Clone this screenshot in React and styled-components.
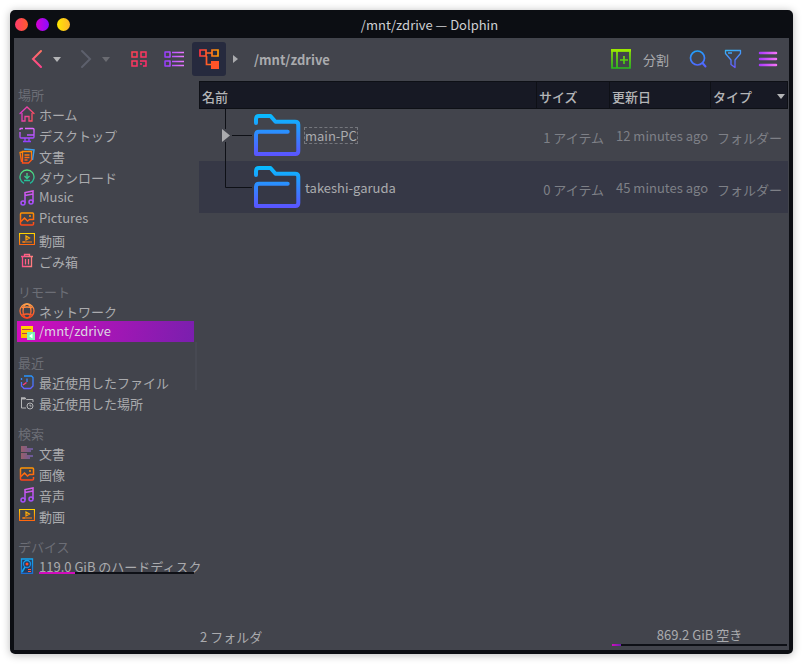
import React from "react";
import styled, { createGlobalStyle, css } from "styled-components";

const color = {
  panel: "#42444c",
  frame: "#0c0e13",
  header: "#171924",
  line: "#0e1016",
  stripe: "#363846",
  text: "#aaabae",
  dim: "#7e8087",
  faint: "#6c6e76",
};

const GlobalStyle = createGlobalStyle`
  * { box-sizing: border-box; }
  body {
    margin: 0;
    background: #fff;
    color: ${color.text};
    font: 13px/19px "Noto Sans CJK JP", "Noto Sans", sans-serif;
  }
  button {
    border: 0;
    padding: 0;
    background: none;
    color: inherit;
    font: inherit;
    cursor: pointer;
  }
  svg { display: block; flex: none; }
`;

const Desktop = styled.div`
  display: flex;
  min-height: 100vh;
  padding: 10px;
`;

const Window = styled.div`
  flex: 1;
  min-width: 0;
  display: flex;
  flex-direction: column;
  padding: 0 4px 4px;
  border-radius: 5px;
  background: ${color.frame};
  box-shadow: 0 1px 8px rgba(0, 0, 0, 0.28);
`;

const TitleBar = styled.header`
  display: flex;
  align-items: center;
  height: 28px;
`;

const WindowButtons = styled.div`
  display: flex;
  gap: 8px;
  padding-left: 1px;
`;

const WindowButton = styled.button`
  width: 13px;
  height: 13px;
  border-radius: 50%;
  background: linear-gradient(90deg, ${(p) => p.$from}, ${(p) => p.$to});
`;

const Title = styled.h1`
  flex: 1;
  margin: 0;
  font-size: 13px;
  font-weight: 400;
  text-align: center;
  color: #cfd0d3;
`;

const Toolbar = styled.div`
  display: flex;
  align-items: center;
  gap: 1px;
  height: 43px;
  padding: 0 4px 1px 6px;
  background: ${color.panel};
`;

const NavButton = styled.button`
  display: flex;
  align-items: center;
  gap: 5px;
  height: 34px;
  padding: 0 7px 0 6px;
  &:disabled { opacity: 0.35; }
`;

const ViewModes = styled.div`
  display: flex;
  gap: 1px;
  padding-left: 4px;
`;

const IconButton = styled.button`
  display: grid;
  place-items: center;
  width: 34px;
  height: 34px;
  border-radius: 3px;
  background: ${(p) => (p.$active ? "#262a3e" : "none")};
`;

const Breadcrumb = styled.nav`
  flex: 1;
  display: flex;
  align-items: center;
  gap: 16px;
  padding-left: 6px;
  a { color: inherit; font-weight: 700; text-decoration: none; }
`;

const SplitButton = styled.button`
  display: flex;
  align-items: center;
  gap: 11px;
  height: 34px;
  padding: 0 11px 0 6px;
  span { padding-top: 1px; }
`;

const Body = styled.div`
  flex: 1;
  display: flex;
  background: ${color.panel};
`;

const Places = styled.nav`
  flex: none;
  width: 180px;
  padding-left: 3px;
`;

const Section = styled.section`
  &:first-child { margin-top: -7px; }
`;

const SectionTitle = styled.h2`
  height: 29px;
  margin: 0;
  padding: 11px 0 0 1px;
  font-size: 13px;
  font-weight: 400;
  color: ${color.faint};
`;

const PlaceLink = styled.a`
  display: flex;
  align-items: center;
  gap: 4px;
  height: 21px;
  padding-left: 2px;
  color: inherit;
  text-decoration: none;
  white-space: nowrap;
  ${(p) => p.$selected && css`
    color: #dcd6e2;
    background: linear-gradient(100deg, #d20cbd, #7a1fae);
  `}
`;

const PlaceLabel = styled.span`
  position: relative;
  flex: 1;
  min-width: 0;
  height: 21px;
  padding-top: ${(p) => (p.$cjk ? "2px" : "0")};
`;

const UsageTrack = styled.span`
  display: block;
  height: 2px;
  background: ${color.line};
  ${(p) => p.$overlay && css`
    position: absolute;
    left: 0;
    right: 0;
    bottom: 2px;
  `}
`;

const UsageFill = styled.span`
  display: block;
  height: 100%;
  background: linear-gradient(90deg, #d20cbd, ${(p) => p.$end});
`;

const Splitter = styled.div`
  display: flex;
  align-items: center;
  width: 5px;
  padding-left: 1px;
  &::before {
    content: "";
    width: 2px;
    height: 48px;
    background: #474952;
  }
`;

const Main = styled.main`
  flex: 1;
  min-width: 0;
  display: flex;
  flex-direction: column;
  padding-right: 1px;
`;

const FileTable = styled.table`
  width: 100%;
  table-layout: fixed;
  border-collapse: separate;
  border-spacing: 0;
`;

const Col = styled.col`
  width: ${(p) => p.$width};
`;

const HeadCell = styled.th`
  height: 28px;
  padding: 2px 2px 0;
  border: solid ${color.line};
  border-width: 1px 1px 1px 0;
  background: ${color.header};
  color: #b4b5b7;
  font-weight: 500;
  text-align: left;
  &:first-child { border-left-width: 1px; }
`;

const HeadLabel = styled.div`
  display: flex;
  align-items: center;
  justify-content: space-between;
`;

const FileRow = styled.tr`
  height: 52px;
  &:nth-child(even) { background: ${color.stripe}; }
`;

const Cell = styled.td`
  padding: ${(p) => (p.$cjk ? "5px 6px 0" : "0 6px")};
  color: ${color.dim};
  text-align: ${(p) => (p.$right ? "right" : "left")};
  white-space: nowrap;
`;

const NameCell = styled.td`
  padding: 0;
`;

const NameContent = styled.div`
  display: flex;
  align-items: center;
  height: 52px;
`;

const Branch = styled.div`
  position: relative;
  width: 54px;
  height: 52px;
`;

const Expander = styled.button`
  position: absolute;
  left: 23px;
  top: 20px;
`;

const FileName = styled.span`
  margin-left: 3px;
  border: 1px dashed ${(p) => (p.$focused ? "#74767c" : "transparent")};
  line-height: 15px;
`;

const StatusBar = styled.footer`
  display: flex;
  justify-content: space-between;
  align-items: flex-end;
  margin-top: auto;
  padding: 0 1px 4px;
`;

const Capacity = styled.div`
  width: 175px;
  text-align: center;
`;

const CapacityText = styled.div`
  line-height: 19px;
`;

/* Gradient in icon coordinates, so it also paints perfectly straight strokes */
function SpaceGrad({ id, from, to, x2, y2 }) {
  return (
    <linearGradient id={id} gradientUnits="userSpaceOnUse" x1="0" y1="0" x2={x2} y2={y2}>
      <stop offset="0" stopColor={from} />
      <stop offset="1" stopColor={to} />
    </linearGradient>
  );
}

const Icon = ({ size = 22, children }) => (
  <svg width={size} height={size} viewBox={`0 0 ${size} ${size}`} fill="none" aria-hidden="true">
    {children}
  </svg>
);

const DownArrow = () => (
  <svg width="8" height="5" viewBox="0 0 8 5" aria-hidden="true"><path d="M0 0h8L4 5z" fill="#b4b5b7" /></svg>
);

const RightArrow = ({ w = 5, h = 8 }) => (
  <svg width={w} height={h} viewBox={`0 0 ${w} ${h}`} aria-hidden="true">
    <path d={`M0 0L${w} ${h / 2}L0 ${h}z`} fill="#aaabae" />
  </svg>
);

const BackIcon = () => (
  <Icon>
    <defs><SpaceGrad id="back" from="#ff7a5c" to="#ff3f8e" x2={0} y2={20} /></defs>
    <path d="M15 3L7 11l8 8" stroke="url(#back)" strokeWidth="2" strokeLinecap="round" />
  </Icon>
);

const ForwardIcon = () => (
  <Icon><path d="M7 3l8 8-8 8" stroke="#8f94a8" strokeWidth="2" strokeLinecap="round" /></Icon>
);

const GridIcon = () => (
  <Icon>
    <defs><SpaceGrad id="grid" from="#ff4a4a" to="#ff2d6a" x2={16} y2={16} /></defs>
    <path d="M4 4h5v5H4zM13 4h5v5h-5zM4 13h5v5H4zM12 13h6v5h-3M13 15v2" stroke="url(#grid)" strokeWidth="1.500" />
  </Icon>
);

const ListIcon = () => (
  <Icon>
    <defs><SpaceGrad id="list" from="#8f35ff" to="#f07cff" x2={22} y2={0} /></defs>
    <path d="M2 4h5v5H2zM2 13h5v5H2z" stroke="url(#list)" strokeWidth="1.500" strokeLinejoin="round" />
    <path d="M9 4.500h12M9 8.500h12M9 13.500h12M9 17.500h12" stroke="url(#list)" strokeWidth="1.500" />
  </Icon>
);

const TreeIcon = () => (
  <Icon>
    <defs><SpaceGrad id="tree" from="#ff2b45" to="#ffa400" x2={22} y2={0} /></defs>
    <path d="M2 2h6v6H2zM14 2h6v6h-6zM8 5h6M8.500 8v8.500H13" stroke="url(#tree)" strokeWidth="1.700" />
    <path d="M13 13h8v8h-8z" fill="#ff5428" />
  </Icon>
);

const SplitIcon = () => (
  <Icon>
    <defs><SpaceGrad id="split" from="#9fef00" to="#1fb81f" x2={0} y2={22} /></defs>
    <path d="M2 3h18v17H2zM7 3v17M10 12h8M14 8v8" stroke="url(#split)" strokeWidth="1.700" />
    <path d="M1 1h20v2.500H1z" fill="#9be800" />
  </Icon>
);

const SearchIcon = () => (
  <Icon>
    <defs><SpaceGrad id="search" from="#12b4ff" to="#5a5cff" x2={4} y2={22} /></defs>
    <circle cx="10.500" cy="10" r="7" stroke="url(#search)" strokeWidth="1.700" />
    <path d="M15.500 15l3 3.500" stroke="url(#search)" strokeWidth="2" strokeLinecap="round" />
  </Icon>
);

const FilterIcon = () => (
  <Icon>
    <defs><SpaceGrad id="filter" from="#2cc4f5" to="#6a55ff" x2={6} y2={22} /></defs>
    <path d="M3.500 2.500h15v3L13 12v7.500l-4-3V12L3.500 5.500zM6 5h4" stroke="url(#filter)" strokeWidth="1.300" strokeLinejoin="round" />
  </Icon>
);

const MenuIcon = () => (
  <Icon>
    <defs><SpaceGrad id="menu" from="#a030ff" to="#ff7cf6" x2={22} y2={0} /></defs>
    <path d="M3 5h16M3 11h16M3 17h16" stroke="url(#menu)" strokeWidth="2.500" strokeLinecap="round" />
  </Icon>
);

const FolderIcon = ({ id }) => (
  <Icon size={48}>
    <defs><SpaceGrad id={id} from="#00c4ff" to="#5a55ff" x2={0} y2={44} /></defs>
    <path
      d="M3 12V8q0-3 3-3h11.500l5 5.700H42q3.300 0 3.300 3V40q0 3-3 3H3V23.700q0-3 3-3h28.700"
      stroke={`url(#${id})`} strokeWidth="4" strokeLinecap="round" strokeLinejoin="round"
    />
  </Icon>
);

const placeIcons = {
  home: (id) => (
    <>
      <defs><SpaceGrad id={id} from="#d435e8" to="#ff4f5c" x2={16} y2={4} /></defs>
      <path d="M1 7.500L8 1l7 6.500M3 7.500V15h3v-4.500h4V15h3V7.500" stroke={`url(#${id})`} strokeWidth="1.300" strokeLinecap="round" />
    </>
  ),
  desktop: (id) => (
    <>
      <defs><SpaceGrad id={id} from="#e86cff" to="#8a3cff" x2={0} y2={16} /></defs>
      <path d="M6 1.500h8q1 0 1 1V10q0 1-1 1H2q-1 0-1-1V5M1 3V2q0-.5 1-.5h2M8 8h7M6 11v3M10 11v3M4 14.500h8" stroke={`url(#${id})`} strokeWidth="1.300" />
    </>
  ),
  documents: (id) => (
    <>
      <defs><SpaceGrad id={id} from="#ff9a00" to="#ff4a1c" x2={0} y2={16} /></defs>
      <path d="M6 2V1l9 1-1.500 10" stroke="#3f9fe8" strokeWidth="1.500" />
      <path d="M3.500 3.500h9V12l-3 3h-6zM3 4l-2 .5L2.500 14M5.500 7h5M5.500 9.500h5M5.500 12h3" stroke={`url(#${id})`} strokeWidth="1.300" />
    </>
  ),
  downloads: (id) => (
    <>
      <defs><SpaceGrad id={id} from="#5ce87c" to="#16b0a0" x2={0} y2={16} /></defs>
      <path d="M5 14.300A7 7 0 1 1 11 14.300M8 4v5M5.500 7L8 9.500 10.500 7M5 11.500h6" stroke={`url(#${id})`} strokeWidth="1.300" />
    </>
  ),
  music: (id) => (
    <>
      <defs><SpaceGrad id={id} from="#dc5ce8" to="#9c4cff" x2={0} y2={16} /></defs>
      <path d="M6 13V2.500L14 1v11M6 5.500L14 4" stroke={`url(#${id})`} strokeWidth="1.500" />
      <circle cx="4" cy="13" r="2" stroke={`url(#${id})`} strokeWidth="1.500" />
      <circle cx="12" cy="12" r="2" stroke={`url(#${id})`} strokeWidth="1.500" />
    </>
  ),
  pictures: (id) => (
    <>
      <defs><SpaceGrad id={id} from="#ffa000" to="#ff3a1c" x2={0} y2={16} /></defs>
      <path d="M14.500 9V3q0-1-1-1H2.500q-1 0-1 1v10q0 1 1 1h11q1 0 1-1v-2M2 10.500L5.500 7l3 3 2-1.500h4" stroke={`url(#${id})`} strokeWidth="1.500" />
      <circle cx="11" cy="5" r="1" fill="#ff8c08" />
    </>
  ),
  video: (id) => (
    <>
      <defs><SpaceGrad id={id} from="#ffe000" to="#ff5a10" x2={0} y2={14} /></defs>
      <path d="M.500 1.500h15v11H.500zM7 4v4l3.500-2zM3 10h10M5 9v2" stroke={`url(#${id})`} strokeWidth="1.200" />
    </>
  ),
  trash: (id) => (
    <>
      <defs><SpaceGrad id={id} from="#ff3f8c" to="#ff8c7c" x2={16} y2={0} /></defs>
      <path d="M2 3.500h12M5.500 3V1.500h5V3M3.500 4v9.500h9V4M6.500 6v5.500M9.500 6v5.500" stroke={`url(#${id})`} strokeWidth="1.300" />
    </>
  ),
  network: (id) => (
    <>
      <defs><SpaceGrad id={id} from="#ffa64c" to="#ff3c1c" x2={0} y2={16} /></defs>
      <g stroke={`url(#${id})`} strokeWidth="1.300">
        <circle cx="8" cy="8" r="7" />
        <ellipse cx="8" cy="8" rx="4" ry="7" />
        <path d="M3 4.500q5-1 10 0M3 12q5-2 10 0" />
      </g>
    </>
  ),
  remote: (id) => (
    <>
      <defs><SpaceGrad id={id} from="#ffe000" to="#ffb000" x2={0} y2={16} /></defs>
      <path d="M2 2h12v12H2z" fill={`url(#${id})`} />
      <path d="M3 5.500h9M3 9.500h5" stroke="#b8404c" />
      <path d="M8 8h8v8H8z" fill="#7cf0b4" />
      <path d="M13.500 9.500v5L10 12z" fill="#fff" />
    </>
  ),
  recentFiles: (id) => (
    <>
      <defs><SpaceGrad id={id} from="#1c9cff" to="#6a5cff" x2={0} y2={16} /></defs>
      <path d="M5 2h7.500L14 3.500V12l-2.500 2.500H5L2.500 12V8M2.500 6V4M8 4.500V8" stroke={`url(#${id})`} strokeWidth="1.300" />
      <path d="M7.500 8.500L4 11" stroke="#ff3c7c" strokeWidth="1.500" />
    </>
  ),
  recentPlaces: () => (
    <>
      <path d="M7 13H2.500V3.500M14 7V4.500H7.500L6 3H2" stroke="#b4b5b7" />
      <path d="M2 2.500h4.500v2H2z" fill="#b4b5b7" />
      <circle cx="11" cy="11" r="3" stroke="#b4b5b7" />
      <path d="M11 9.500V11h1.500" stroke="#b4b5b7" />
    </>
  ),
  lines: (id) => (
    <>
      <defs><SpaceGrad id={id} from="#ff7c7c" to="#7c6cff" x2={16} y2={0} /></defs>
      <path d="M2 2h6M2 4h12M2 6h10M2 9h6M2 11h12M2 13h9" stroke={`url(#${id})`} />
    </>
  ),
  disk: (id) => (
    <>
      <defs><SpaceGrad id={id} from="#14a8f0" to="#1c6cd0" x2={0} y2={16} /></defs>
      <path d="M2.500 1h11v14.500h-11z" fill="#263a5c" stroke={`url(#${id})`} strokeWidth="1.300" />
      <circle cx="8" cy="6" r="3.500" stroke={`url(#${id})`} strokeWidth="1.300" />
      <circle cx="8" cy="6" r="1.500" fill="#ff4c2c" />
      <path d="M6 9l-3 5" stroke="#14a8f0" strokeWidth="1.500" />
      <path d="M9 11.500h3M9 13.500h3" stroke="#ff5c3c" />
    </>
  ),
};

const sections = [
  { title: "場所", items: [
    { icon: "home", label: "ホーム" },
    { icon: "desktop", label: "デスクトップ" },
    { icon: "documents", label: "文書" },
    { icon: "downloads", label: "ダウンロード" },
    { icon: "music", label: "Music", latin: true },
    { icon: "pictures", label: "Pictures", latin: true },
    { icon: "video", label: "動画" },
    { icon: "trash", label: "ごみ箱" },
  ] },
  { title: "リモート", items: [
    { icon: "network", label: "ネットワーク" },
    { icon: "remote", label: "/mnt/zdrive", latin: true, selected: true },
  ] },
  { title: "最近", items: [
    { icon: "recentFiles", label: "最近使用したファイル" },
    { icon: "recentPlaces", label: "最近使用した場所" },
  ] },
  { title: "検索", items: [
    { icon: "lines", label: "文書" },
    { icon: "pictures", label: "画像" },
    { icon: "music", label: "音声" },
    { icon: "video", label: "動画" },
  ] },
  { title: "デバイス", items: [
    { icon: "disk", label: "119.0 GiB のハードディスク", used: 23 },
  ] },
];

const files = [
  { name: "main-PC", size: "1 アイテム", date: "12 minutes ago", type: "フォルダー", focused: true, expandable: true },
  { name: "takeshi-garuda", size: "0 アイテム", date: "45 minutes ago", type: "フォルダー" },
];

function Place({ id, item }) {
  return (
    <PlaceLink href="#" $selected={item.selected} aria-current={item.selected ? "page" : undefined}>
      <Icon size={16}>{placeIcons[item.icon](id)}</Icon>
      <PlaceLabel $cjk={!item.latin}>
        {item.label}
        {item.used && (
          <UsageTrack $overlay>
            <UsageFill $end="#d20cbd" style={{ width: `${item.used}%` }} />
          </UsageTrack>
        )}
      </PlaceLabel>
    </PlaceLink>
  );
}

function FileEntry({ file }) {
  return (
    <FileRow>
      <NameCell>
        <NameContent>
          <Branch>
            <svg width="54" height="52" viewBox="0 0 54 52" fill="none" aria-hidden="true">
              <path
                d={file.expandable ? "M26.500 0v20M26.500 33v19M33 26.500h20" : "M26.500 0v26.500H53"}
                stroke={color.line}
              />
            </svg>
            {file.expandable && (
              <Expander aria-label="展開"><RightArrow w={8} h={13} /></Expander>
            )}
          </Branch>
          <FolderIcon id={`folder-${file.name}`} />
          <FileName $focused={file.focused}>{file.name}</FileName>
        </NameContent>
      </NameCell>
      <Cell $cjk $right>{file.size}</Cell>
      <Cell>{file.date}</Cell>
      <Cell $cjk>{file.type}</Cell>
    </FileRow>
  );
}

export default function App() {
  return (
    <Desktop>
      <GlobalStyle />
      <Window>
        <TitleBar>
          <WindowButtons>
            <WindowButton aria-label="閉じる" $from="#ff3c6c" $to="#ff5c2c" />
            <WindowButton aria-label="最小化" $from="#d400d4" $to="#8a0cff" />
            <WindowButton aria-label="最大化" $from="#ffe800" $to="#ffb42c" />
          </WindowButtons>
          <Title>/mnt/zdrive — Dolphin</Title>
        </TitleBar>
        <Toolbar>
          <NavButton aria-label="戻る"><BackIcon /><DownArrow /></NavButton>
          <NavButton aria-label="進む" disabled><ForwardIcon /><DownArrow /></NavButton>
          <ViewModes>
            <IconButton aria-label="アイコン"><GridIcon /></IconButton>
            <IconButton aria-label="コンパクト"><ListIcon /></IconButton>
            <IconButton aria-label="詳細" aria-pressed="true" $active><TreeIcon /></IconButton>
          </ViewModes>
          <Breadcrumb>
            <RightArrow />
            <a href="#">/mnt/zdrive</a>
          </Breadcrumb>
          <SplitButton><SplitIcon /><span>分割</span></SplitButton>
          <IconButton aria-label="検索"><SearchIcon /></IconButton>
          <IconButton aria-label="フィルター"><FilterIcon /></IconButton>
          <IconButton aria-label="メニュー"><MenuIcon /></IconButton>
        </Toolbar>
        <Body>
          <Places>
            {sections.map((section, s) => (
              <Section key={section.title}>
                <SectionTitle>{section.title}</SectionTitle>
                {section.items.map((item, i) => (
                  <Place key={item.label} id={`place-${s}-${i}`} item={item} />
                ))}
              </Section>
            ))}
          </Places>
          <Splitter />
          <Main>
            <FileTable>
              <colgroup>
                <Col $width="auto" />
                <Col $width="73px" />
                <Col $width="101px" />
                <Col $width="77px" />
              </colgroup>
              <thead>
                <tr>
                  <HeadCell>名前</HeadCell>
                  <HeadCell>サイズ</HeadCell>
                  <HeadCell>更新日</HeadCell>
                  <HeadCell><HeadLabel>タイプ<DownArrow /></HeadLabel></HeadCell>
                </tr>
              </thead>
              <tbody>
                {files.map((file) => <FileEntry key={file.name} file={file} />)}
              </tbody>
            </FileTable>
            <StatusBar>
              <span>2 フォルダ</span>
              <Capacity>
                <CapacityText>869.2 GiB 空き</CapacityText>
                <UsageTrack><UsageFill $end="#6a1fae" style={{ width: "5%" }} /></UsageTrack>
              </Capacity>
            </StatusBar>
          </Main>
        </Body>
      </Window>
    </Desktop>
  );
}
